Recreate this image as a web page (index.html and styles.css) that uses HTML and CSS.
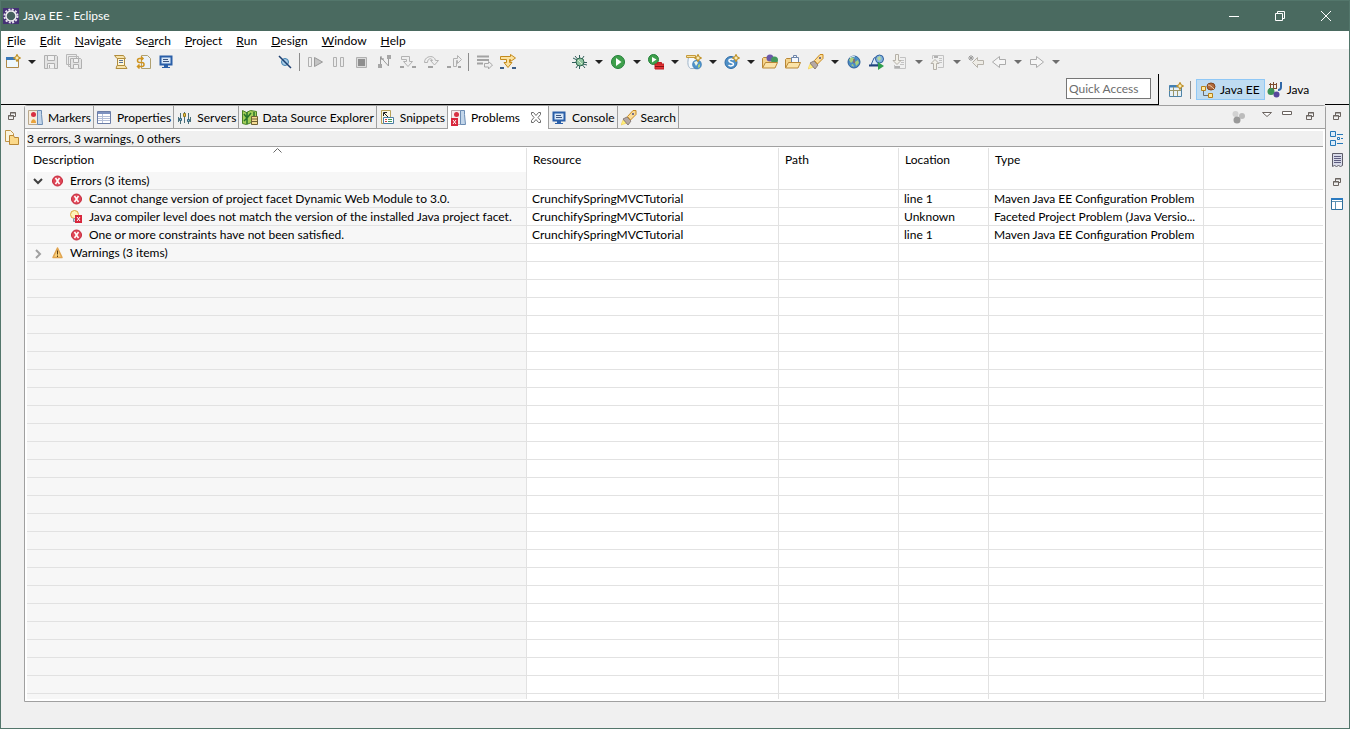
FILE: index.html
```html
<!DOCTYPE html>
<html lang="en">

<head>
    <meta charset="UTF-8">
    <meta name="viewport" content="width=device-width, initial-scale=1.0">
    <title>Java EE - Eclipse</title>
    <link rel="stylesheet" href="styles.css">
</head>

<body>
    <!-- shared icons -->
    <svg class="sprite">
        <symbol id="i-restore" viewBox="0 0 16 16">
            <path d="M7.500 7V4.500h5v4H11M7 5h6M5.500 7.500h5v4h-5zM5 8h6" fill="none" stroke="#6b6460" />
        </symbol>
        <symbol id="i-error" viewBox="0 0 16 16">
            <circle cx="7.500" cy="8" r="5" fill="#e04858" stroke="#c4283c" />
            <path d="M5.500 5l4 6M9.500 5l-4 6" stroke="#fff" stroke-width="1.500" fill="none" />
        </symbol>
        <symbol id="i-console" viewBox="0 0 16 16">
            <path d="M1.500 2.500h11v8h-11z" fill="#d9e8f8" stroke="#2a5fa8" stroke-width="2" />
            <path d="M4 5.500h5M4 7.500h6" stroke="#3c5580" />
            <path d="M5 11h4v2H5zM3 13h8v1H3z" fill="#2a5fa8" />
        </symbol>
        <symbol id="i-search" viewBox="0 0 16 16">
            <path d="M0 15l2-5 4 3z" fill="#fff27a" stroke="#f0c040" stroke-width=".5" />
            <path d="M2 9l4-2 4 4-3 4z" fill="#b5a9a4" stroke="#8a7d78" />
            <path d="M6.500 6.500L12 .5h3v4L9.500 10z" fill="#fbdc98" stroke="#c88a20" />
            <circle cx="12" cy="4" r="1" fill="#4d4d80" />
        </symbol>
        <symbol id="i-spark" viewBox="0 0 7 7">
            <path d="M3.500 .5l1 2 2 1-2 1-1 2-1-2-2-1 2-1z" fill="#fff7c8" stroke="#c0922a" />
        </symbol>
    </svg>

    <div class="window">
        <header class="titlebar">
            <svg class="icon" viewBox="0 0 16 16">
                <path d="M0 0h16v16H0z" fill="#443075" />
                <circle cx="8" cy="8" r="6.500" fill="none" stroke="#e4e2e8" stroke-width="2" stroke-dasharray="2 1.400" />
                <circle cx="8" cy="8" r="5" fill="#46605e" stroke="#f2f0f4" stroke-width="1.500" />
            </svg>
            <h1 class="title">Java EE - Eclipse</h1>
            <div class="controls">
                <button aria-label="Minimize"><svg viewBox="0 0 10 10"><path d="M0 5.500h10" /></svg></button>
                <button aria-label="Restore"><svg viewBox="0 0 10 10"><path d="M.5 2.500h7v7h-7zM2.500 2V.5h7v7H8" /></svg></button>
                <button aria-label="Close"><svg viewBox="0 0 10 10"><path d="M0 0l10 10M10 0L0 10" /></svg></button>
            </div>
        </header>

        <nav class="menubar">
            <button><u>F</u>ile</button>
            <button><u>E</u>dit</button>
            <button><u>N</u>avigate</button>
            <button>Se<u>a</u>rch</button>
            <button><u>P</u>roject</button>
            <button><u>R</u>un</button>
            <button><u>D</u>esign</button>
            <button><u>W</u>indow</button>
            <button><u>H</u>elp</button>
        </nav>

        <div class="toolbar">
            <div class="group">
                <button aria-label="New"><svg class="icon" viewBox="0 0 16 16">
                    <path d="M1.500 4.500h12v9h-12z" fill="#eef8fd" stroke="#b08a48" />
                    <path d="M1 3h9v3H1z" fill="#3a78b8" />
                    <use href="#i-spark" x="8" y="0" width="8" height="8" />
                </svg></button>
                <button class="arrow" aria-label="New menu"></button>
                <button aria-label="Save" disabled><svg class="icon" viewBox="0 0 16 16">
                    <path d="M1.500 1.500h12l1 1v12h-13z" fill="#e4e4e4" stroke="#b0b0b0" />
                    <path d="M4.500 1.500h7v5h-7zM4.500 14.500v-5h7v5M6.500 11v3" fill="#f2f2f2" stroke="#b0b0b0" />
                </svg></button>
                <button aria-label="Save All" disabled><svg class="icon" viewBox="0 0 16 16">
                    <path d="M.5 .5h10v10H.5zM2.500 2.500h10v10h-10z" fill="#ececec" stroke="#b8b8b8" />
                    <path d="M4.500 4.500h10l1 1v9h-11z" fill="#e4e4e4" stroke="#b0b0b0" />
                    <path d="M7.500 4.500h5v4h-5zM7.500 14.500v-4h5v4" fill="#f2f2f2" stroke="#b0b0b0" />
                </svg></button>
            </div>
            <div class="group group-view">
                <button aria-label="Link"><svg class="icon" viewBox="0 0 16 16">
                    <path d="M1.500 1.500h9l2 3H4zM3 14.500h11l-2-3H4z" fill="#f7e3ac" stroke="#b08c3c" />
                    <path d="M4.500 4.500h7v7h-7z" fill="#fff6d6" stroke="#b08c3c" />
                    <path d="M6 6.500h4M6 8.500h4" stroke="#5d7396" />
                </svg></button>
                <button aria-label="Refresh"><svg class="icon" viewBox="0 0 16 16">
                    <path d="M5.500 1.500h6l3 3v10h-9z" fill="#eaf2fb" stroke="#b0a070" />
                    <path d="M6 4.500H3.500a2 2 0 0 0 0 4H6M2 12.500h4a2 2 0 0 0 0-4M5 2.500l2 2-2 2M3.500 10.500l-2 2 2 2" fill="none" stroke="#cf9420" stroke-width="1.500" />
                </svg></button>
                <button aria-label="Console"><svg class="icon"><use href="#i-console" /></svg></button>
            </div>
            <div class="group group-debug">
                <button aria-label="Skip Breakpoints"><svg class="icon" viewBox="0 0 16 16">
                    <circle cx="8" cy="8" r="3.500" fill="#a9cde8" stroke="#3f7fae" />
                    <path d="M2 2l12 12" stroke="#1d3f70" stroke-width="1.500" />
                </svg></button>
                <span class="sep"></span>
                <button aria-label="Resume" disabled><svg class="icon" viewBox="0 0 16 16">
                    <path d="M.5 3.500h3v9h-3z" fill="#f0f0f0" stroke="#b0b0b0" />
                    <path d="M6.500 3.500l8 4.500-8 4.500z" fill="#c4c4c4" stroke="#9a9a9a" />
                </svg></button>
                <button aria-label="Suspend" disabled><svg class="icon" viewBox="0 0 16 16">
                    <path d="M2.500 3.500h3v9h-3zM9.500 3.500h3v9h-3z" fill="#ececec" stroke="#b0b0b0" />
                </svg></button>
                <button aria-label="Terminate" disabled><svg class="icon" viewBox="0 0 16 16">
                    <path d="M2.500 3.500h10v10h-10z" fill="#dcdcdc" stroke="#b0b0b0" />
                    <path d="M4 5h7v7H4z" fill="#8e8e8e" />
                </svg></button>
                <button aria-label="Disconnect" disabled><svg class="icon" viewBox="0 0 16 16">
                    <path d="M3.500 11V3l8 9V4" fill="none" stroke="#9c9c9c" />
                    <path d="M1 10h4v4H1zM10 1h4v4h-4z" fill="#a6a6a6" />
                    <path d="M4 2v3h3" fill="none" stroke="#8f8f8f" />
                </svg></button>
                <button aria-label="Step Into" disabled><svg class="icon" viewBox="0 0 16 16">
                    <path d="M1.500 2.500h8v5h3l-4.500 5-4.500-5h3v-2h-5z" fill="#efefef" stroke="#b2b2b2" />
                    <path d="M0 12h4v2H0zM12 12h4v2h-4z" fill="#a2a2a2" />
                </svg></button>
                <button aria-label="Step Over" disabled><svg class="icon" viewBox="0 0 16 16">
                    <path d="M1.500 8.500c0-7 10-8 11-2h3l-4 4.500-4-4.500h2c-1-3-5-2-5 2z" fill="#efefef" stroke="#b2b2b2" />
                    <path d="M5 12h5v2H5z" fill="#a2a2a2" />
                </svg></button>
                <button aria-label="Step Return" disabled><svg class="icon" viewBox="0 0 16 16">
                    <path d="M7.500 12.500v-8h4v-3l4 4-4 4v-3h-1v6z" fill="#efefef" stroke="#b2b2b2" />
                    <path d="M1 12h4v2H1zM12 12h3v2h-3z" fill="#a2a2a2" />
                </svg></button>
                <span class="sep"></span>
                <button aria-label="Drop to Frame" disabled><svg class="icon" viewBox="0 0 16 16">
                    <path d="M0 2.500h12M0 6h12M0 9.500h6" stroke="#a2a2a2" stroke-width="2" />
                    <path d="M7.500 9.500h4v-2l4 3.500-4 4v-2h-4z" fill="#eee" stroke="#a8a8a8" />
                </svg></button>
                <button aria-label="Use Step Filters"><svg class="icon" viewBox="0 0 16 16">
                    <path d="M.5 2.500h10v-2l5 3.500-5 3.500v-2H9.500v3H12l-4 5-4-5h2.500v-3h-6z" fill="#fbe2a0" stroke="#c48a1c" />
                    <path d="M0 13h4v2H0zM12 13h4v2h-4z" fill="#3d5f88" />
                </svg></button>
            </div>
            <div class="group group-run">
                <button aria-label="Debug"><svg class="icon" viewBox="0 0 16 16">
                    <path d="M0 8.500h15M3 2l10 12M12 2L4 14M7.500 1v14M1 4l4 2M15 11l-4-1" stroke="#315f5c" />
                    <ellipse cx="8" cy="8" rx="4" ry="4" fill="#8fc3a0" stroke="#316850" />
                    <path d="M6 6l4 4" stroke="#d6efcb" />
                </svg></button>
                <button class="arrow" aria-label="Debug menu"></button>
                <button aria-label="Run"><svg class="icon" viewBox="0 0 16 16">
                    <circle cx="8" cy="8" r="6.500" fill="#3fa04c" stroke="#23803a" />
                    <path d="M6 4l5.500 4L6 12z" fill="#fff" />
                </svg></button>
                <button class="arrow" aria-label="Run menu"></button>
                <button aria-label="External Tools"><svg class="icon" viewBox="0 0 16 16">
                    <circle cx="5.500" cy="5.500" r="5" fill="#3fa04c" stroke="#23803a" />
                    <path d="M4 3l4.500 2.500L4 8.500z" fill="#fff" />
                    <path d="M7 10h9v5H7zM9.500 10V8.500h4V10" fill="#e23636" stroke="#c01c22" />
                    <path d="M7 12.500h9" stroke="#8a1015" />
                </svg></button>
                <button class="arrow" aria-label="External Tools menu"></button>
                <button aria-label="New Web Project"><svg class="icon" viewBox="0 0 16 16">
                    <path d="M2.500 3.500h8v11h-6c-3-2-3-6-2-11z" fill="#f3f8fc" stroke="#9fb4c8" />
                    <path d="M.5 1.500h9v2h-9z" fill="#f9e2a0" stroke="#c49a3c" />
                    <circle cx="11" cy="10.500" r="4.500" fill="#4f93cb" stroke="#2b6ca5" stroke-width=".5" />
                    <path d="M8 8l3-1 1 2-2 3z" fill="#eef5e4" />
                    <path d="M12 11l2-1v3l-2 1z" fill="#a9cf7c" />
                    <use href="#i-spark" x="8" y="0" width="8" height="8" />
                </svg></button>
                <button class="arrow" aria-label="New Web Project menu"></button>
                <button aria-label="New Servlet"><svg class="icon" viewBox="0 0 16 16">
                    <circle cx="7" cy="8.500" r="6" fill="#4f8fc6" stroke="#2c6aa5" />
                    <path d="M9.500 6C8 4.500 4.500 5 5 7s4.500 1 4.500 3-3.500 2.500-5 1" fill="none" stroke="#fff" stroke-width="1.500" />
                    <use href="#i-spark" x="8" y="0" width="8" height="8" />
                </svg></button>
                <button class="arrow" aria-label="New Servlet menu"></button>
                <button aria-label="Open Type"><svg class="icon" viewBox="0 0 16 16">
                    <path d="M.5 13.500v-9l1-1h4l1 2h6v8z" fill="#f5d48c" stroke="#b98735" />
                    <circle cx="8" cy="4" r="3.500" fill="#6a58a8" />
                    <circle cx="12.500" cy="6" r="3.500" fill="#43985c" />
                    <path d="M.5 14l3-5.500h12L13 14z" fill="#fbe3a8" stroke="#b98735" />
                </svg></button>
                <button aria-label="Open Task"><svg class="icon" viewBox="0 0 16 16">
                    <path d="M.5 13.500v-8l1-1h4l1 1h6v8z" fill="#f5d48c" stroke="#b98735" />
                    <path d="M6.500 3.500h7v6h-7zM8.500 3.500v-2h3v2" fill="#f4f8fd" stroke="#6d84a8" />
                    <path d="M.5 14l3-5.500h12L13 14z" fill="#fbe3a8" stroke="#b98735" />
                </svg></button>
                <button aria-label="Search"><svg class="icon"><use href="#i-search" /></svg></button>
                <button class="arrow" aria-label="Search menu"></button>
                <button aria-label="Open Web Browser"><svg class="icon" viewBox="0 0 16 16">
                    <circle cx="8" cy="8" r="6" fill="#4b8cc5" stroke="#2c5f98" />
                    <path d="M3 6l2-3 3 1-1 3-2 2zM9 8l3-2 1 3-3 3zM5 11l2-1 1 3z" fill="#a9cf7c" />
                    <path d="M8 5v4" stroke="#b5542a" />
                    <path d="M4 4c2-2 4-2 5-1" stroke="#d9eefa" fill="none" />
                </svg></button>
                <button aria-label="Web Services"><svg class="icon" viewBox="0 0 16 16">
                    <path d="M2 11l3-7 4-2v9z" fill="#dbe9f6" stroke="#2f5f9e" />
                    <circle cx="10.500" cy="5" r="4" fill="#83b4dc" stroke="#2f5f9e" />
                    <path d="M8 4l3-2 1 3-2 2z" fill="#b8d89a" />
                    <path d="M0 11.500h9" stroke="#20437c" stroke-width="2" />
                    <path d="M9 8l6 4-6 4z" fill="#2f9e4c" />
                </svg></button>
                <button aria-label="Next Annotation" disabled><svg class="icon" viewBox="0 0 16 16">
                    <path d="M8 3.500h5.500v11h-11V11M8 6.500h4M9 8.500h3M8 10.500h4" fill="none" stroke="#c2c2c2" />
                    <path d="M3.500 .5h3v6h2.500l-4 4-4-4h2.500z" fill="#f2f0e8" stroke="#b4b0a8" />
                    <path d="M3 12h5v2H3z" fill="#b0b0b0" />
                </svg></button>
                <button class="arrow dim" aria-label="Next Annotation menu"></button>
                <button aria-label="Previous Annotation" disabled><svg class="icon" viewBox="0 0 16 16">
                    <path d="M2.500 5V1.500h11v12H8M9 4.500h3M9 6.500h3M9 8.500h3" fill="none" stroke="#c2c2c2" />
                    <path d="M3.500 15.500v-6H1l4-4 4 4H6.500v6z" fill="#f2f0e8" stroke="#b4b0a8" />
                    <path d="M4 2h4v2H4z" fill="#b0b0b0" />
                </svg></button>
                <button class="arrow dim" aria-label="Previous Annotation menu"></button>
                <button aria-label="Last Edit Location" disabled><svg class="icon" viewBox="0 0 16 16">
                    <path d="M15.500 6.500h-6v-3l-5 5 5 5v-3h6z" fill="#eeece6" stroke="#b6b2aa" />
                    <path d="M3 1v6M0 4h6M1 2l4 4M5 2L1 6" stroke="#9a9a9a" />
                </svg></button>
                <button aria-label="Back" disabled><svg class="icon" viewBox="0 0 16 16">
                    <path d="M14.500 5.500h-6v-3l-7 5.500 7 5.500v-3h6z" fill="#f6f6f6" stroke="#ababab" />
                </svg></button>
                <button class="arrow dim" aria-label="Back menu"></button>
                <button aria-label="Forward" disabled><svg class="icon" viewBox="0 0 16 16">
                    <path d="M1.500 5.500h6v-3l7 5.500-7 5.500v-3h-6z" fill="#f6f6f6" stroke="#ababab" />
                </svg></button>
                <button class="arrow dim" aria-label="Forward menu"></button>
            </div>
        </div>

        <div class="switcher">
            <div class="quick">
                <input type="text" placeholder="Quick Access" aria-label="Quick Access">
            </div>
            <div class="perspectives">
                <button aria-label="Open Perspective"><svg class="icon" viewBox="0 0 16 16">
                    <path d="M1.500 3.500h12v11h-12z" fill="#e8f1f8" stroke="#4f83a6" />
                    <path d="M1.500 4.500h9" stroke="#3f7fb8" stroke-width="2" />
                    <path d="M5.500 5v9M1 8.500h12M9.500 8v6" stroke="#9a9668" />
                    <use href="#i-spark" x="8" y="0" width="8" height="8" />
                </svg></button>
                <span class="sep"></span>
                <button class="persp active"><svg class="icon" viewBox="0 0 16 16">
                    <path d="M3.500 9v4.500H8" fill="none" stroke="#6b6b6b" />
                    <path d="M1.500 4.500h4v4h-4zM8.500 11.500h4v4h-4z" fill="#ffe89c" stroke="#b5801a" />
                    <ellipse cx="11" cy="4.500" rx="4" ry="3.500" fill="#b06a3c" stroke="#80451e" />
                    <path d="M8 3c2 0 4 2 6 4" stroke="#f3d3b0" fill="none" />
                </svg>Java EE</button>
                <button class="persp"><svg class="icon" viewBox="0 0 16 16">
                    <path d="M2 2.500h8M2 6.500h8M3.500 1v8M6.500 0v8M9.500 1v6" stroke="#7d4b2e" />
                    <path d="M14 0v5c0 2-1 3-3 3" fill="none" stroke="#2e67a8" stroke-width="2" />
                    <circle cx="4" cy="9.500" r="3.500" fill="#3c9458" />
                    <circle cx="9.500" cy="12.500" r="3" fill="#58479c" />
                </svg>Java</button>
            </div>
            <div class="corner"></div>
        </div>

        <div class="workbench">
            <aside class="trim trim-left">
                <button aria-label="Restore"><svg class="icon"><use href="#i-restore" /></svg></button>
                <button aria-label="Project Explorer"><svg class="icon" viewBox="0 0 16 16">
                    <path d="M2.500 .5h5l3 3v8h-8z" fill="#fbf3dc" stroke="#c09548" />
                    <path d="M6.500 14.500v-9h4l1 2h4v7z" fill="#fbd98a" stroke="#b98735" />
                </svg></button>
            </aside>

            <main class="stack">
                <div class="tabs" role="tablist">
                    <button class="tab" role="tab"><svg class="icon" viewBox="0 0 16 16">
                        <path d="M.5 .5h9v14h-9z" fill="#f7ecdc" stroke="#b9a88c" />
                        <path d="M9.500 .5h4v4l1 10h-5z" fill="#c3d6ea" stroke="#6c8db4" />
                        <circle cx="5.500" cy="4.500" r="2.500" fill="#d83042" />
                        <path d="M3 13c0-5 5-5 5 0z" fill="#e8a23c" />
                    </svg>Markers</button>
                    <button class="tab" role="tab"><svg class="icon" viewBox="0 0 16 16">
                        <path d="M.5 1.500h13v12H.5z" fill="#fff" stroke="#6b7da6" />
                        <path d="M1 2h12v2H1z" fill="#7d92c0" />
                        <path d="M1 6.500h12M1 8.500h12M1 10.500h12M5.500 4v9" stroke="#b4bfd8" />
                    </svg>Properties</button>
                    <button class="tab" role="tab"><svg class="icon" viewBox="0 0 16 16">
                        <path d="M3.500 3v11M7.500 2v11M11.500 3v11M1.500 7v5M13.500 7v5" stroke="#4a6f78" />
                        <path d="M2.500 8.500h2v2h-2zM10.500 9.500h2v2h-2z" fill="#8cc0dc" stroke="#35647c" />
                        <path d="M6.500 3.500h2v3h-2z" fill="#e8c34c" stroke="#977a1c" />
                    </svg>Servers</button>
                    <button class="tab" role="tab"><svg class="icon" viewBox="0 0 16 16">
                        <path d="M.5 .5l4 2 4-2 6 1v12l-5-1-5 2-4-1z" fill="#a4cf5a" stroke="#4b8228" />
                        <path d="M2 4l3 4 4-5M5 2v12M2 11l3-3M12 2v5" stroke="#28752c" fill="none" stroke-width="1.500" />
                        <path d="M9.500 6.500h6v8h-6zM9.500 9h6M9.500 11.500h6" fill="#f7dd94" stroke="#6f6134" />
                    </svg>Data Source Explorer</button>
                    <button class="tab" role="tab"><svg class="icon" viewBox="0 0 16 16">
                        <path d="M1.500 .5h9v13h-9z" fill="#fdf8e4" stroke="#b7a158" />
                        <path d="M3.500 6V2.500H7M4 3l4 4" stroke="#222" fill="none" />
                        <path d="M3.500 7.500h10v6h-10z" fill="#fff" stroke="#4d7ea4" />
                        <path d="M5 9.500h2M5 11.500h2" stroke="#d04040" />
                        <path d="M8 9.500h4M8 11.500h4" stroke="#3f9858" />
                    </svg>Snippets</button>
                    <div class="tab active" role="tab" aria-selected="true"><svg class="icon" viewBox="0 0 16 16">
                        <path d="M.5 .5h9v14h-9z" fill="#f7ecec" stroke="#b9a8ac" />
                        <path d="M9.500 .5h4v4l1 10h-5z" fill="#c3d6ea" stroke="#6c8db4" />
                        <circle cx="5.500" cy="4.500" r="2.500" fill="#d83042" />
                        <path d="M0 8h7v8H0z" fill="#d8263c" />
                        <path d="M2 10l3 4M5 10l-3 4" stroke="#fff" />
                    </svg>Problems<button class="close" aria-label="Close"><svg class="icon" viewBox="0 0 16 16">
                        <path d="M3.500 2.500h2l2.500 3 2.500-3h2v2L10 7.500l2.500 3v2h-2L8 9.500l-2.500 3h-2v-2l2.500-3-2.500-3z" fill="#fff" stroke="#6a6a6a" />
                    </svg></button></div>
                    <button class="tab" role="tab"><svg class="icon"><use href="#i-console" /></svg>Console</button>
                    <button class="tab" role="tab"><svg class="icon"><use href="#i-search" /></svg>Search</button>
                    <div class="view-tools">
                        <button class="focus" aria-label="Focus on Active Task" disabled><svg class="icon" viewBox="0 0 16 16">
                            <circle cx="4.500" cy="6" r="3" fill="#d2d2d2" />
                            <circle cx="11" cy="8" r="3" fill="#bcbcbc" />
                            <circle cx="6" cy="12" r="3.500" fill="#999" />
                        </svg></button>
                        <button aria-label="View Menu"><svg class="icon" viewBox="0 0 16 16">
                            <path d="M3.500 4.500h9l-4.500 4z" fill="#fff" stroke="#6b6460" />
                        </svg></button>
                        <button aria-label="Minimize"><svg class="icon" viewBox="0 0 16 16">
                            <path d="M2.500 3.500h9v3h-9z" fill="#fff" stroke="#6b6460" />
                        </svg></button>
                        <button aria-label="Restore"><svg class="icon"><use href="#i-restore" /></svg></button>
                    </div>
                </div>

                <div class="view">
                    <p class="summary">3 errors, 3 warnings, 0 others</p>
                    <div class="scroll">
                        <table class="problems">
                            <colgroup>
                                <col class="c-desc">
                                <col class="c-res">
                                <col class="c-path">
                                <col class="c-loc">
                                <col class="c-type">
                                <col>
                            </colgroup>
                            <thead>
                                <tr>
                                    <th class="sorted">Description<svg class="sort" viewBox="0 0 9 5"><path d="M.5 4.500l4-4 4 4" /></svg></th>
                                    <th>Resource</th>
                                    <th>Path</th>
                                    <th>Location</th>
                                    <th>Type</th>
                                    <th></th>
                                </tr>
                            </thead>
                            <tbody>
                                <tr>
                                    <td><div class="node"><svg class="twist open" viewBox="0 0 16 16"><path d="M4 6l4 4 4-4" /></svg><svg class="icon"><use href="#i-error" /></svg>Errors (3 items)</div></td>
                                    <td></td><td></td><td></td><td></td><td></td>
                                </tr>
                                <tr>
                                    <td><div class="node leaf"><svg class="icon"><use href="#i-error" /></svg>Cannot change version of project facet Dynamic Web Module to 3.0.</div></td>
                                    <td>CrunchifySpringMVCTutorial</td>
                                    <td></td>
                                    <td>line 1</td>
                                    <td>Maven Java EE Configuration Problem</td>
                                    <td></td>
                                </tr>
                                <tr>
                                    <td><div class="node leaf"><svg class="icon" viewBox="0 0 16 16">
                                        <circle cx="5.500" cy="5.500" r="4" fill="#fff3b8" stroke="#dba83c" />
                                        <path d="M4.500 9.500h3v3h-3z" fill="#c9d3e0" stroke="#8795a8" />
                                        <path d="M6 6h7v8H6z" fill="#d8263c" />
                                        <path d="M8 8l3 4M11 8l-3 4" stroke="#fff" />
                                    </svg>Java compiler level does not match the version of the installed Java project facet.</div></td>
                                    <td>CrunchifySpringMVCTutorial</td>
                                    <td></td>
                                    <td>Unknown</td>
                                    <td>Faceted Project Problem (Java Versio...</td>
                                    <td></td>
                                </tr>
                                <tr>
                                    <td><div class="node leaf"><svg class="icon"><use href="#i-error" /></svg>One or more constraints have not been satisfied.</div></td>
                                    <td>CrunchifySpringMVCTutorial</td>
                                    <td></td>
                                    <td>line 1</td>
                                    <td>Maven Java EE Configuration Problem</td>
                                    <td></td>
                                </tr>
                                <tr>
                                    <td><div class="node"><svg class="twist" viewBox="0 0 16 16"><path d="M6 5l4 4-4 4" /></svg><svg class="icon" viewBox="0 0 16 16">
                                        <path d="M7.500 3L12 12.500H3z" fill="#fbd27c" stroke="#e0a450" stroke-width="1.500" stroke-linejoin="round" />
                                        <path d="M7.500 5.500v4M7.500 10.500v1.500" stroke="#5a3c10" />
                                    </svg>Warnings (3 items)</div></td>
                                    <td></td><td></td><td></td><td></td><td></td>
                                </tr>
                            </tbody>
                        </table>
                    </div>
                </div>
            </main>

            <aside class="trim trim-right">
                <button aria-label="Restore"><svg class="icon"><use href="#i-restore" /></svg></button>
                <button aria-label="Outline"><svg class="icon" viewBox="0 0 16 16">
                    <path d="M2.500 1.500h5v5h-5zM2.500 10.500h5v5h-5z" fill="#dcecf9" stroke="#2477b8" />
                    <path d="M9 4.500h6M9 13.500h6M13 8.500h2" stroke="#2477b8" />
                    <path d="M9.500 7.500h2v2h-2z" fill="#fff" stroke="#2477b8" />
                </svg></button>
                <button aria-label="Task List"><svg class="icon" viewBox="0 0 16 16">
                    <path d="M4.500 1.500h10v12l-2 1-2-1-2 1-2-1-2 1z" fill="#d8dae8" stroke="#5d5c68" />
                    <path d="M6 4.500h7M6 6.500h7M6 8.500h7M6 10.500h7" stroke="#5d5c80" />
                </svg></button>
                <button aria-label="Restore"><svg class="icon"><use href="#i-restore" /></svg></button>
                <button aria-label="Editor Area"><svg class="icon" viewBox="0 0 16 16">
                    <path d="M3.500 2.500h11v11h-11z" fill="#fff" stroke="#2f6f9c" />
                    <path d="M3 3h12" stroke="#2a7ac0" stroke-width="2" />
                    <path d="M4 5.500h10M7.500 5v8" stroke="#5c93b4" />
                </svg></button>
            </aside>
        </div>
        <footer class="statusbar"></footer>
    </div>
    <script>
        // fill the rest of the view with empty grid rows
        var oBody = document.querySelector('.problems tbody');
        var oScroll = document.querySelector('.scroll');
        var rows = Math.ceil(oScroll.offsetHeight / 18);
        for (var i = oBody.rows.length; i < rows; i++) {
            var tr = oBody.insertRow();
            for (var j = 0; j < 6; j++) {
                tr.insertCell();
            }
        }
    </script>
</body>

</html>
```
FILE: styles.css
```css
* {
    margin: 0;
    padding: 0;
    box-sizing: border-box;
}

body {
    font-family: Lato, "Open Sans", sans-serif;
    font-size: 12px;
    line-height: 18px;
    color: #000;
}

button,
input {
    font: inherit;
    color: inherit;
    border: none;
    background: none;
}

button {
    display: flex;
    align-items: center;
    white-space: nowrap;
}

svg {
    display: block;
    flex: none;
}

.sprite {
    width: 0;
    height: 0;
    position: absolute;
}

.icon {
    width: 16px;
    height: 16px;
}

.window {
    display: flex;
    flex-direction: column;
    height: 100vh;
    border: 1px solid #53766b;
    background-color: #f0f0f0;
    overflow: hidden;
}

/* title */
.titlebar {
    display: flex;
    align-items: center;
    height: 30px;
    padding-left: 2px;
    background-color: #4a6a60;
    color: #fff;
}

.title {
    flex: 1;
    margin-left: 4px;
    font-size: 12px;
    font-weight: normal;
}

.controls {
    display: flex;
}

.controls button {
    justify-content: center;
    width: 46px;
    height: 30px;
}

.controls svg {
    width: 10px;
    height: 10px;
    fill: none;
    stroke: #fff;
}

/* menu */
.menubar {
    display: flex;
    height: 18px;
    padding: 1px 0 0 6px;
    gap: 14px;
    background-color: #fff;
}

/* toolbar */
.toolbar {
    display: flex;
    height: 25px;
}

.group {
    display: flex;
    align-items: center;
}

.group-view {
    margin-left: 24px;
}

.group-debug {
    margin-left: 95px;
}

.group-run {
    margin-left: 49px;
}

.group button {
    justify-content: center;
    width: 23px;
    height: 24px;
}

.group .arrow {
    width: 15px;
}

.arrow::before {
    content: "";
    border: 4px solid transparent;
    border-top-color: #222;
    border-bottom: none;
}

.arrow.dim::before {
    border-top-color: #6e6e6e;
}

.sep {
    width: 1px;
    height: 18px;
    margin: 0 4px 0 3px;
    background-color: #8c8c8c;
}

/* quick access and perspectives */
.switcher {
    display: flex;
    height: 31px;
}

.quick {
    flex: 1;
    display: flex;
    justify-content: flex-end;
    align-items: flex-start;
    padding: 4px 7px 0 0;
    border-right: 1px solid #000;
    border-bottom: 1px solid #000;
}

.quick input {
    width: 85px;
    height: 21px;
    padding: 0 2px;
    border: 1px solid #767676;
    background-color: #fff;
}

.quick input::placeholder {
    color: #6d6d6d;
}

.perspectives {
    display: flex;
    align-items: center;
    width: 166px;
    padding-left: 9px;
}

.perspectives .sep {
    margin: 0 5px 0 6px;
}

.persp {
    height: 21px;
    padding: 0 4px 0 1px;
    gap: 4px;
    border: 1px solid transparent;
}

.persp.active {
    padding: 0 4px 0 3px;
    border-color: #90c8f6;
    background-color: #bfdcf2;
}

.corner {
    width: 24px;
    border-bottom: 1px solid #000;
}

/* workbench */
.workbench {
    flex: 1;
    display: flex;
    min-height: 0;
}

.trim {
    display: flex;
    flex-direction: column;
    width: 23px;
    padding: 3px 0 0 2px;
    gap: 6px;
}

.stack {
    flex: 1;
    display: flex;
    flex-direction: column;
    min-width: 0;
    border: 1px solid #a0a0a0;
    border-top-left-radius: 3px;
    border-top-right-radius: 3px;
    background-color: #fff;
}

.tabs {
    display: flex;
    height: 23px;
    border-bottom: 1px solid #a0a0a0;
    background-color: #f0f0f0;
}

.tab {
    display: flex;
    align-items: center;
    height: 22px;
    padding: 1px 2px 0 3px;
    gap: 4px;
    border-right: 1px solid #a0a0a0;
    white-space: nowrap;
}

.tab.active {
    height: 23px;
    padding: 0 4px 0 3px;
    background-color: #fff;
}

.close {
    margin-left: 4px;
}

.view-tools {
    display: flex;
    height: 20px;
    margin-left: auto;
    gap: 5px;
    padding-right: 8px;
}

.focus {
    margin-right: 7px;
}

.view {
    flex: 1;
    display: flex;
    flex-direction: column;
    min-height: 0;
    padding: 2px;
}

.summary {
    height: 16px;
    line-height: 16px;
    border-bottom: 1px solid #a0a0a0;
    background-color: #f0f0f0;
}

.scroll {
    flex: 1;
    min-height: 0;
    padding-top: 1px;
    overflow: hidden;
}

/* problems table */
.problems {
    width: 100%;
    table-layout: fixed;
    border-collapse: separate;
    border-spacing: 0;
}

.c-desc {
    width: 500px;
}

.c-res {
    width: 252px;
}

.c-path {
    width: 120px;
}

.c-loc {
    width: 90px;
}

.c-type {
    width: 215px;
}

.problems th {
    height: 24px;
    padding-left: 6px;
    border-right: 1px solid #e2e2e2;
    font-weight: normal;
    text-align: left;
}

.problems .sorted {
    position: relative;
}

.sort {
    position: absolute;
    top: 0;
    left: calc(50% - 4px);
    width: 9px;
    height: 5px;
    fill: none;
    stroke: #666;
}

.problems td {
    height: 18px;
    padding: 0 4px 0 5px;
    border-right: 1px solid #e2e2e2;
    border-bottom: 1px solid #e2e2e2;
    line-height: 17px;
    white-space: nowrap;
    overflow: hidden;
    text-overflow: ellipsis;
}

.problems td:first-child {
    padding: 0;
    background-color: #f7f7f7;
}

.problems th:last-child,
.problems td:last-child {
    border-right: none;
}

.node {
    display: flex;
    align-items: center;
    padding-left: 3px;
    gap: 4px;
}

.node.leaf {
    padding-left: 42px;
}

.twist {
    width: 16px;
    height: 16px;
    fill: none;
    stroke: #a0a0a0;
    stroke-width: 2;
}

.twist.open {
    stroke: #404040;
}

.statusbar {
    height: 26px;
}
```
